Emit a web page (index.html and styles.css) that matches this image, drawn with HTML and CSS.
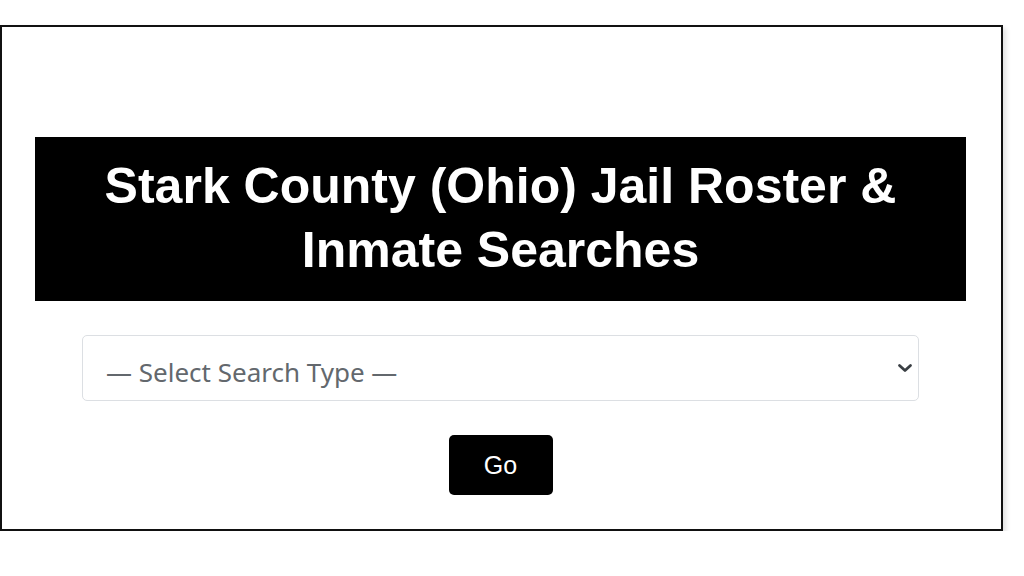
FILE: index.html
```html
<!DOCTYPE html>
<html lang="en">
<head>
<meta charset="utf-8">
<title>Stark County (Ohio) Jail Roster &amp; Inmate Searches</title>
<link rel="stylesheet" href="styles.css">
</head>
<body>
<div class="frame">
  <h1 class="banner">Stark County (Ohio) Jail Roster &amp;<br>Inmate Searches</h1>
  <div class="select-wrap">
    <select class="search-select">
      <option>— Select Search Type —</option>
      <option>Jail Roster</option>
      <option>Inmate Search</option>
    </select>
    <svg class="chevron" width="16" height="10" viewBox="0 0 16 10" aria-hidden="true">
      <path d="M2.5 2.5 L8 7.5 L13.5 2.5" fill="none" stroke="#3a3f44" stroke-width="2.8" stroke-linecap="round" stroke-linejoin="round"/>
    </svg>
  </div>
  <button class="go-btn" type="button">Go</button>
</div>
</body>
</html>
```
FILE: styles.css
```css
html, body {
  margin: 0;
  padding: 0;
  background: #ffffff;
}
body {
  padding-top: 25px;
}
.frame {
  width: 931px;
  border: 2px solid #111111;
  padding: 110px 35px 34px 33px;
  display: flex;
  flex-direction: column;
  align-items: center;
  box-shadow: 3px 3px 5px rgba(0, 0, 0, 0.12);
  background: #ffffff;
}
.banner {
  align-self: stretch;
  margin: 0;
  background: #000000;
  color: #ffffff;
  font-family: "Liberation Sans", Arial, sans-serif;
  font-weight: bold;
  font-size: 50px;
  line-height: 64px;
  text-align: center;
  padding: 17px 0 19px;
}
.select-wrap {
  position: relative;
  width: 837px;
  margin-top: 34px;
}
.search-select {
  display: block;
  width: 100%;
  height: 66px;
  box-sizing: border-box;
  appearance: none;
  -webkit-appearance: none;
  border: 1px solid #dcdfe3;
  border-radius: 5px;
  background: #ffffff;
  color: #63686d;
  font-family: "Noto Sans", "Open Sans", sans-serif;
  font-size: 26px;
  padding: 8px 40px 0 23px;
  outline: none;
}
.chevron {
  position: absolute;
  right: 6px;
  top: 28px;
}
.go-btn {
  margin-top: 34px;
  width: 104px;
  height: 60px;
  border: none;
  border-radius: 5px;
  background: #000000;
  color: #ffffff;
  font-family: "Liberation Sans", Arial, sans-serif;
  font-size: 25px;
  padding: 0;
  cursor: pointer;
}
```
